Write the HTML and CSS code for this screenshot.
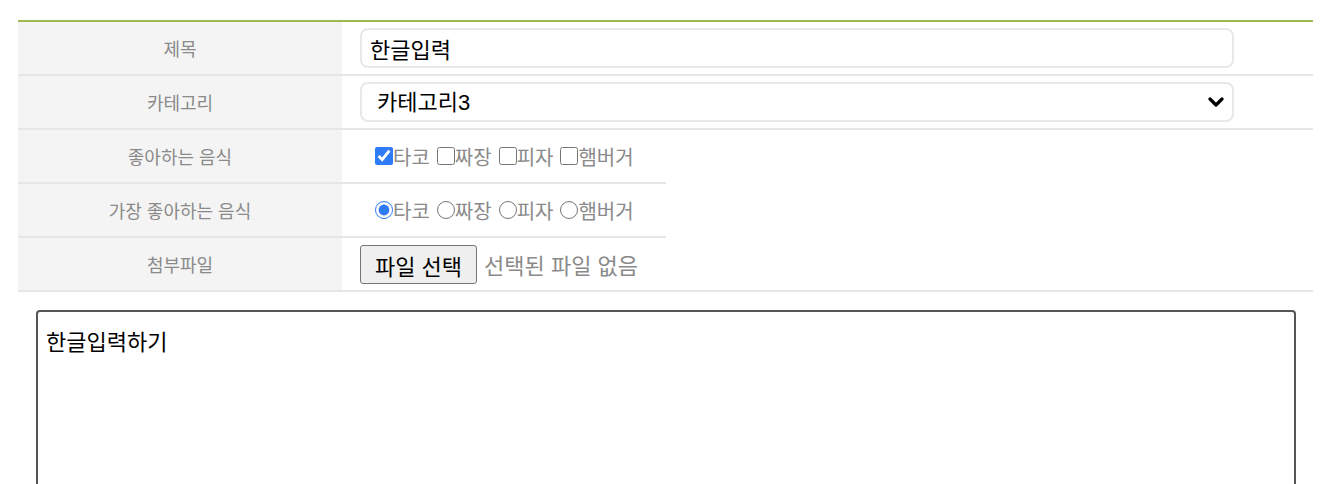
FILE: index.html
```html
<!DOCTYPE html>
<html>
<head>
	<meta charset="utf-8">
	<title>글쓰기</title>
	<link rel="stylesheet" href="styles.css">
</head>
<body>
	<div class="write-wrap">
		<div class="board">
			<div class="th">제목</div>
			<div class="td wide">
				<input class="text-input" type="text" value="한글입력">
			</div>

			<div class="th">카테고리</div>
			<div class="td wide">
				<div class="select-box">
					<select class="select">
						<option>카테고리1</option>
						<option>카테고리2</option>
						<option selected>카테고리3</option>
					</select>
					<svg class="chevron" width="16" height="11" viewBox="0 0 16 11">
						<path d="M2 2 L8 8 L14 2" fill="none" stroke="#000" stroke-width="3.2" stroke-linecap="round" stroke-linejoin="round"/>
					</svg>
				</div>
			</div>

			<div class="th">좋아하는 음식</div>
			<div class="td narrow">
				<label><input type="checkbox" checked>타코</label>
				<label><input type="checkbox">짜장</label>
				<label><input type="checkbox">피자</label>
				<label><input type="checkbox">햄버거</label>
			</div>

			<div class="th">가장 좋아하는 음식</div>
			<div class="td narrow">
				<label><input type="radio" name="best" checked>타코</label>
				<label><input type="radio" name="best">짜장</label>
				<label><input type="radio" name="best">피자</label>
				<label><input type="radio" name="best">햄버거</label>
			</div>

			<div class="th">첨부파일</div>
			<div class="td wide">
				<button class="file-btn" type="button">파일 선택</button>
				<span class="file-name">선택된 파일 없음</span>
			</div>
		</div>

		<textarea class="content">한글입력하기</textarea>
	</div>
</body>
</html>
```

FILE: styles.css
```css
html, body {
	margin: 0;
	padding: 0;
	background: #fff;
	font-family: "Liberation Sans", "Noto Sans CJK KR", sans-serif;
	overflow: hidden;
}
.write-wrap {
	width: 1295px;
	margin: 20px 0 0 18px;
}
.board {
	display: grid;
	grid-template-columns: 324px 324px 1fr;
	border-top: 2px solid #9cbb4c;
}
.th, .td {
	height: 52px;
	border-bottom: 2px solid #e6e6e6;
	display: flex;
	align-items: center;
}
.th {
	grid-column: 1;
	justify-content: center;
	background-color: #f4f4f4;
	color: #8a8a8a;
	font-size: 18px;
}
.td {
	padding-left: 18px;
	color: #8a8a8a;
	font-size: 20px;
}
.td.wide {
	grid-column: 2 / 4;
}
.td.narrow {
	grid-column: 2;
	padding-left: 33px;
}
.text-input, .select {
	box-sizing: border-box;
	width: 874px;
	height: 40px;
	border: 2px solid #e8e8e8;
	border-radius: 8px;
	padding: 0 8px;
	font-family: inherit;
	font-size: 22px;
	color: #000;
	background: #fff;
	outline: none;
}
.select-box {
	position: relative;
	width: 874px;
}
.select {
	appearance: none;
	-webkit-appearance: none;
	padding-left: 15px;
}
.chevron {
	position: absolute;
	right: 10px;
	top: 15px;
	pointer-events: none;
}
.td label {
	display: flex;
	align-items: center;
	margin-right: 7px;
}
.td input[type="checkbox"],
.td input[type="radio"] {
	width: 18px;
	height: 18px;
	margin: 0 0 0 0;
	accent-color: #2f7bf5;
}
.file-btn {
	height: 39px;
	padding: 0 14px;
	margin-top: 1px;
	font-family: inherit;
	font-size: 22px;
	color: #000;
	background: #efefef;
	border: 1px solid #767676;
	border-radius: 3px;
}
.file-name {
	margin-left: 7px;
	font-size: 22px;
	color: #8a8a8a;
}
.content {
	display: block;
	box-sizing: border-box;
	width: 1260px;
	height: 220px;
	margin: 18px 0 0 18px;
	padding: 12px 8px;
	border: 2px solid #555;
	border-radius: 4px;
	font-family: inherit;
	font-size: 22px;
	color: #000;
	resize: none;
	outline: none;
}
```
